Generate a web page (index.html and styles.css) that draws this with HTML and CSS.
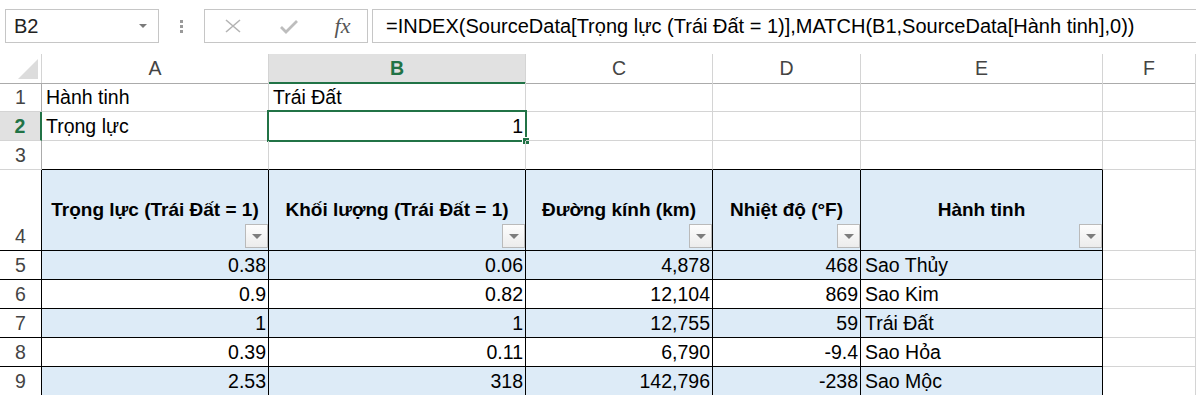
FILE: index.html
```html
<!doctype html>
<html>
<head>
<meta charset="utf-8">
<title>Trọng lực hành tinh</title>
	<link rel="stylesheet" href="styles.css">
</head>
<body>
	<div class="formula-bar">
		<div class="name-box">B2<span class="caret"></span></div>
		<div class="grip"><i></i><i></i><i></i></div>
		<div class="fx-group">
			<span class="fx-btn">
				<svg width="18" height="18" viewBox="0 0 18 18"><path d="M2 3 L16 15 M16 3 L2 15" stroke="#b4b4b4" stroke-width="1.6" fill="none"/></svg>
			</span>
			<span class="fx-btn">
				<svg width="20" height="18" viewBox="0 0 20 18"><path d="M2 10 L7 15 L18 4" stroke="#bdbdbd" stroke-width="2.8" fill="none"/></svg>
			</span>
			<span class="fx-btn fx">fx</span>
		</div>
		<div class="formula">=INDEX(SourceData[Trọng lực (Trái Đất = 1)],MATCH(B1,SourceData[Hành tinh],0))</div>
	</div>

	<div class="sheet">
		<div class="row">
			<div class="c corner"><span class="tri"></span></div>
			<div class="c h">A</div>
			<div class="c h sel">B</div>
			<div class="c h">C</div>
			<div class="c h">D</div>
			<div class="c h">E</div>
			<div class="c h">F</div>
		</div>
		<div class="row">
			<div class="c n">1</div>
			<div class="c">Hành tinh</div>
			<div class="c">Trái Đất</div>
			<div class="c"></div>
			<div class="c"></div>
			<div class="c"></div>
			<div class="c"></div>
		</div>
		<div class="row">
			<div class="c n sel">2</div>
			<div class="c">Trọng lực</div>
			<div class="c r active">1<span class="cursor"><span class="handle"></span></span></div>
			<div class="c"></div>
			<div class="c"></div>
			<div class="c"></div>
			<div class="c"></div>
		</div>
		<div class="row">
			<div class="c n">3</div>
			<div class="c top"></div>
			<div class="c top"></div>
			<div class="c top"></div>
			<div class="c top"></div>
			<div class="c top"></div>
			<div class="c"></div>
		</div>
		<div class="row tall">
			<div class="c n t">4</div>
			<div class="c t b th">Trọng lực (Trái Đất = 1)<span class="filter"></span></div>
			<div class="c t b th">Khối lượng (Trái Đất = 1)<span class="filter"></span></div>
			<div class="c t b th">Đường kính (km)<span class="filter"></span></div>
			<div class="c t b th">Nhiệt độ (°F)<span class="filter"></span></div>
			<div class="c t b th">Hành tinh<span class="filter"></span></div>
			<div class="c"></div>
		</div>
		<div class="row">
			<div class="c n t">5</div>
			<div class="c t b r">0.38</div>
			<div class="c t b r">0.06</div>
			<div class="c t b r">4,878</div>
			<div class="c t b r">468</div>
			<div class="c t b">Sao Thủy</div>
			<div class="c"></div>
		</div>
		<div class="row">
			<div class="c n t">6</div>
			<div class="c t r">0.9</div>
			<div class="c t r">0.82</div>
			<div class="c t r">12,104</div>
			<div class="c t r">869</div>
			<div class="c t">Sao Kim</div>
			<div class="c"></div>
		</div>
		<div class="row">
			<div class="c n t">7</div>
			<div class="c t b r">1</div>
			<div class="c t b r">1</div>
			<div class="c t b r">12,755</div>
			<div class="c t b r">59</div>
			<div class="c t b">Trái Đất</div>
			<div class="c"></div>
		</div>
		<div class="row">
			<div class="c n t">8</div>
			<div class="c t r">0.39</div>
			<div class="c t r">0.11</div>
			<div class="c t r">6,790</div>
			<div class="c t r">-9.4</div>
			<div class="c t">Sao Hỏa</div>
			<div class="c"></div>
		</div>
		<div class="row">
			<div class="c n t">9</div>
			<div class="c t b r">2.53</div>
			<div class="c t b r">318</div>
			<div class="c t b r">142,796</div>
			<div class="c t b r">-238</div>
			<div class="c t b">Sao Mộc</div>
			<div class="c"></div>
		</div>
	</div>
</body>
</html>
```

FILE: styles.css
```css
*{
	margin: 0;
	padding: 0;
	box-sizing: border-box;
}
body{
	width: 1196px;
	height: 395px;
	overflow: hidden;
	background: #fff;
	color: #000;
	font-family: "Liberation Sans", Arial, sans-serif;
}

/* formula bar */
.formula-bar{
	display: flex;
	height: 54px;
	padding-top: 9px;
	padding-bottom: 11px;
}
.name-box{
	display: flex;
	align-items: center;
	width: 154px;
	margin-left: 5px;
	padding-left: 8px;
	border: 1px solid #c6c6c6;
	font-size: 20px;
	color: #222;
}
.caret{
	margin-left: auto;
	margin-right: 11px;
	border-left: 4px solid transparent;
	border-right: 4px solid transparent;
	border-top: 4px solid #7a7a7a;
}
.grip{
	display: flex;
	flex-direction: column;
	align-items: center;
	justify-content: center;
	gap: 2px;
	width: 45px;
}
.grip i{
	width: 3px;
	height: 3px;
	background: #9a9a9a;
}
.fx-group{
	display: grid;
	grid-template-columns: 56px 55px 53px;
	width: 164px;
	border: 1px solid #c6c6c6;
}
.fx-btn{
	display: flex;
	align-items: center;
	justify-content: center;
}
.fx{
	font-family: "Liberation Serif", serif;
	font-style: italic;
	font-size: 22px;
	color: #555;
}
.formula{
	flex: 1;
	margin-left: 4px;
	padding-left: 13px;
	border: 1px solid #c6c6c6;
	border-right: none;
	font-size: 20px;
	line-height: 32px;
	white-space: nowrap;
	overflow: hidden;
}

/* grid */
.row{
	display: grid;
	grid-template-columns: 42px 227px 257px 187px 148px 242px 93px;
	height: 29px;
}
.row.tall{
	height: 81px;
}
.c{
	position: relative;
	padding: 0 4px;
	border-right: 1px solid #d4d4d4;
	border-bottom: 1px solid #d4d4d4;
	font-size: 19.5px;
	line-height: 28px;
	white-space: nowrap;
}
.h{
	text-align: center;
	color: #444;
	border-bottom-color: #ababab;
}
.h.sel{
	background: #e1e1e1;
	color: #217346;
	font-weight: bold;
	border-bottom: 2px solid #217346;
}
.corner{
	display: flex;
	justify-content: flex-end;
	align-items: flex-end;
	padding: 0 3px 4px 0;
	border-bottom-color: #ababab;
}
.tri{
	border-left: 20px solid transparent;
	border-bottom: 20px solid #dcdcdc;
}
.n{
	padding: 0;
	text-align: center;
	color: #444;
	border-right-color: #ababab;
}
.n.sel{
	background: #e1e1e1;
	color: #217346;
	font-weight: bold;
	border-right: 2px solid #217346;
}
.tall .n{
	display: flex;
	align-items: flex-end;
	justify-content: center;
}
.r{
	text-align: right;
	padding-right: 2px;
}

/* selected cell */
.cursor{
	position: absolute;
	top: -2px;
	left: -2px;
	right: -2px;
	bottom: -2px;
	border: 2px solid #217346;
}
.handle{
	position: absolute;
	right: -5px;
	bottom: -5px;
	width: 8px;
	height: 8px;
	background: #217346;
	border: 1px solid #fff;
}

/* table */
.top{
	border-bottom-color: #000;
}
.t{
	border-right-color: #000;
	border-bottom-color: #000;
}
.b{
	background: #ddebf7;
}
.th{
	display: flex;
	align-items: center;
	justify-content: center;
	font-weight: bold;
	font-size: 19px;
}
.filter{
	position: absolute;
	right: 0;
	bottom: 2px;
	width: 23px;
	height: 24px;
	border: 1px solid #bababa;
	background: linear-gradient(#fdfdfd, #ececec);
}
.filter::after{
	content: "";
	position: absolute;
	left: 6px;
	top: 9px;
	border-left: 5px solid transparent;
	border-right: 5px solid transparent;
	border-top: 5px solid #7d7d7d;
}
```
